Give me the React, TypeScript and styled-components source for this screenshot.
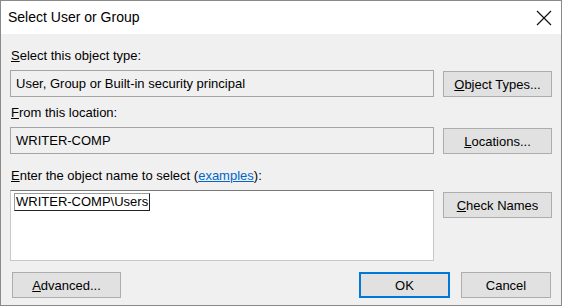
import React from "react";
import styled, { createGlobalStyle } from "styled-components";

const GlobalStyle = createGlobalStyle`
    html, body {
        margin: 0;
        padding: 0;
        background: #f0f0f0;
    }
    body {
        font-family: "Liberation Sans", Arial, sans-serif;
        font-size: 13px;
        color: #000;
    }
`;

const Window = styled.div`
    width: 562px;
    height: 306px;
    box-sizing: border-box;
    border: 1px solid #8a8a8a;
    display: flex;
    flex-direction: column;
    background: #f0f0f0;
`;

const TitleBar = styled.div`
    height: 33px;
    background: #fff;
    display: flex;
    align-items: center;
    justify-content: space-between;
    padding: 0 5px 0 7px;
`;

const Title = styled.div`
    font-size: 14px;
    padding-bottom: 1px;
`;

const CloseButton = styled.div`
    width: 24px;
    height: 24px;
    display: flex;
    align-items: center;
    justify-content: center;
`;

const Body = styled.div`
    flex: 1;
    display: grid;
    grid-template-columns: 1fr 109px;
    column-gap: 9px;
    padding: 14px 9px 0 9px;
    align-content: start;
`;

const Label = styled.div<{ $gap?: number }>`
    grid-column: 1 / -1;
    line-height: 16px;
    height: 16px;
    padding-left: 1px;
    margin-top: ${p => p.$gap ?? 0}px;
    margin-bottom: 6px;
`;

const Key = styled.span`
    text-decoration: underline;
`;

const Link = styled.span`
    color: #0066cc;
    text-decoration: underline;
`;

const ReadOnlyBox = styled.div`
    height: 27px;
    box-sizing: border-box;
    border: 1px solid #a5a5a5;
    background: #f0f0f0;
    display: flex;
    align-items: center;
    padding: 0 5px;
    margin-bottom: 8px;
`;

const NameBox = styled.div`
    height: 71px;
    box-sizing: border-box;
    border: 1px solid #c8c8c8;
    border-top-color: #7a7a7a;
    background: #fff;
    padding: 2px 3px;
`;

const Selected = styled.span`
    display: inline-block;
    line-height: 16px;
    padding: 0 1px;
    border: 1px solid #9a9a9a;
    border-bottom-color: #222;
    border-right-color: #222;
`;

const Button = styled.div<{ $primary?: boolean; $width?: number; $offset?: number }>`
    height: 26px;
    box-sizing: border-box;
    width: ${p => (p.$width ? `${p.$width}px` : "auto")};
    margin-top: ${p => p.$offset ?? 0}px;
    background: #e1e1e1;
    border: ${p => (p.$primary ? "2px solid #0078d7" : "1px solid #adadad")};
    display: flex;
    align-items: center;
    justify-content: center;
    align-self: start;
`;

const Footer = styled.div`
    display: flex;
    align-items: center;
    padding: 0 10px 7px 11px;
    gap: 11px;
`;

const Spacer = styled.div`
    flex: 1;
`;

const App: React.FC = () => {
    return (
        <>
            <GlobalStyle />
            <Window>
                <TitleBar>
                    <Title>Select User or Group</Title>
                    <CloseButton>
                        <svg width="16" height="16" viewBox="0 0 16 16">
                            <path d="M1 1 L15 15 M15 1 L1 15" stroke="#111" strokeWidth="1.2" fill="none" />
                        </svg>
                    </CloseButton>
                </TitleBar>
                <Body>
                    <Label><Key>S</Key>elect this object type:</Label>
                    <ReadOnlyBox>User, Group or Built-in security principal</ReadOnlyBox>
                    <Button $offset={1}><Key>O</Key>bject Types...</Button>

                    <Label><Key>F</Key>rom this location:</Label>
                    <ReadOnlyBox>WRITER-COMP</ReadOnlyBox>
                    <Button $offset={1}><Key>L</Key>ocations...</Button>

                    <Label $gap={6}><Key>E</Key>nter the object name to select (<Link>examples</Link>):</Label>
                    <NameBox>
                        <Selected>WRITER-COMP\Users</Selected>
                    </NameBox>
                    <Button $offset={2}><Key>C</Key>heck Names</Button>
                </Body>
                <Footer>
                    <Button $width={109}><Key>A</Key>dvanced...</Button>
                    <Spacer />
                    <Button $primary $width={91}>OK</Button>
                    <Button $width={90}>Cancel</Button>
                </Footer>
            </Window>
        </>
    );
};

export default App;
